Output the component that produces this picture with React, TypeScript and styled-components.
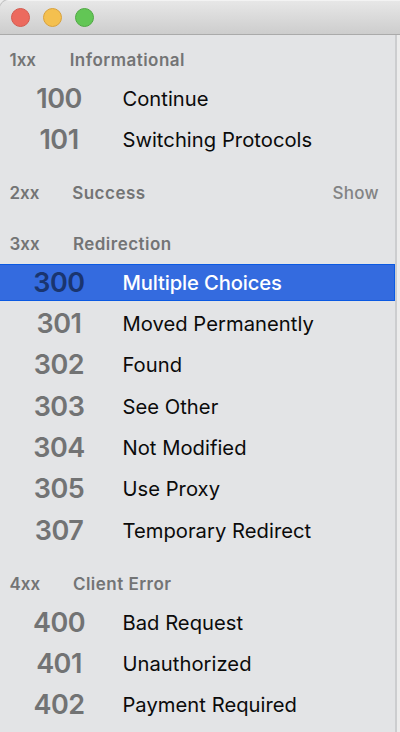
import React from "react";
import styled, { createGlobalStyle } from "styled-components";

const GlobalStyle = createGlobalStyle`
  * { box-sizing: border-box; }
  html, body { margin: 0; height: 100%; overflow: hidden; background: #ececec; }
  body { font-family: Inter, "Liberation Sans", sans-serif; }
`;

const Window = styled.div`
  display: flex;
  flex-direction: column;
  width: 400px;
  height: 732px;
  overflow: hidden;
  border-top-left-radius: 9px;
  background: #e3e4e6;
  box-shadow: 0 0 0 1px #c4c4c4;
`;

const TitleBar = styled.header`
  display: flex;
  flex: none;
  align-items: center;
  gap: 13px;
  height: 35px;
  padding: 0 0 0 11px;
  background: linear-gradient(#e7e7e7, #cdcdcd);
  border-top: 1px solid #f3f3f3;
  border-bottom: 1px solid #aaaaaa;
`;

const Light = styled.span<{ $fill: string; $edge: string }>`
  width: 19px;
  height: 19px;
  border-radius: 50%;
  background: ${(p) => p.$fill};
  border: 1px solid ${(p) => p.$edge};
`;

const Body = styled.div`
  display: flex;
  flex: 1;
  min-height: 0;
`;

const Sidebar = styled.nav`
  display: flex;
  flex-direction: column;
  gap: 14.6px;
  width: 395px;
  padding-top: 6.8px;
  background: #e3e4e6;
  overflow: hidden;
`;

const Pane = styled.main`
  flex: 1;
  border-left: 2px solid #cccdcf;
  background: #ececec;
`;

const Section = styled.section`
  flex: none;
`;

const SectionHeader = styled.div`
  display: flex;
  align-items: center;
  height: 36px;
  padding: 0 16px 0 9.5px;
  color: #737475;
  font-size: 17px;
  font-weight: 600;
  line-height: 36px;
`;

const Group = styled.span<{ $width: number }>`
  width: ${(p) => p.$width}px;
`;

const Title = styled.span`
  flex: 1;
  letter-spacing: 0.48px;
`;

const Show = styled.span`
  color: #828384;
  font-weight: 500;
  letter-spacing: 0.3px;
`;

const Row = styled.div<{ $selected: boolean }>`
  display: flex;
  align-items: center;
  height: 37.33px;
  margin: 2px 0;
  color: ${(p) => (p.$selected ? "#ffffff" : "#0b0b0b")};
  background: ${(p) => (p.$selected ? "#346bdf" : "transparent")};
  border: 1px solid ${(p) => (p.$selected ? "#0b59e2" : "transparent")};
  border-left: 0;
  font-weight: ${(p) => (p.$selected ? 500 : 400)};
`;

const Rows = styled.div`
  display: flow-root;

  ${Row} + ${Row} {
    margin-top: 4px;
  }
`;

const Code = styled.span<{ $selected: boolean }>`
  width: 118px;
  margin-right: 4.4px;
  text-align: center;
  font-size: 27px;
  font-weight: 600;
  line-height: 35px;
  letter-spacing: -0.5px;
  color: ${(p) => (p.$selected ? "#1a356f" : "#727374")};
`;

const Label = styled.span<{ $selected: boolean }>`
  font-size: 20.2px;
  line-height: 35px;
  letter-spacing: ${(p) => (p.$selected ? -0.12 : 0.04)}px;
`;

type Status = { code: string; label: string };
type StatusGroup = {
  group: string;
  title: string;
  offset: number;
  collapsed?: boolean;
  items: Status[];
};

const groups: StatusGroup[] = [
  {
    group: "1xx", title: "Informational", offset: 60.2,
    items: [
      { code: "100", label: "Continue" },
      { code: "101", label: "Switching Protocols" },
    ],
  },
  { group: "2xx", title: "Success", offset: 62.7, collapsed: true, items: [] },
  {
    group: "3xx", title: "Redirection", offset: 63.4,
    items: [
      { code: "300", label: "Multiple Choices" },
      { code: "301", label: "Moved Permanently" },
      { code: "302", label: "Found" },
      { code: "303", label: "See Other" },
      { code: "304", label: "Not Modified" },
      { code: "305", label: "Use Proxy" },
      { code: "307", label: "Temporary Redirect" },
    ],
  },
  {
    group: "4xx", title: "Client Error", offset: 63.4,
    items: [
      { code: "400", label: "Bad Request" },
      { code: "401", label: "Unauthorized" },
      { code: "402", label: "Payment Required" },
    ],
  },
];

export default function App() {
  const selected = "300";
  return (
    <>
      <GlobalStyle />
      <Window>
        <TitleBar>
          <Light $fill="#ec6a5e" $edge="#d35b50" />
          <Light $fill="#f4c04f" $edge="#d8a13c" />
          <Light $fill="#62c655" $edge="#4fa843" />
        </TitleBar>
        <Body>
          <Sidebar>
            {groups.map((g) => (
              <Section key={g.group}>
                <SectionHeader>
                  <Group $width={g.offset}>{g.group}</Group>
                  <Title>{g.title}</Title>
                  {g.collapsed && <Show>Show</Show>}
                </SectionHeader>
                <Rows>
                  {g.items.map((s) => (
                    <Row key={s.code} $selected={s.code === selected}>
                      <Code $selected={s.code === selected}>{s.code}</Code>
                      <Label $selected={s.code === selected}>{s.label}</Label>
                    </Row>
                  ))}
                </Rows>
              </Section>
            ))}
          </Sidebar>
          <Pane />
        </Body>
      </Window>
    </>
  );
}
